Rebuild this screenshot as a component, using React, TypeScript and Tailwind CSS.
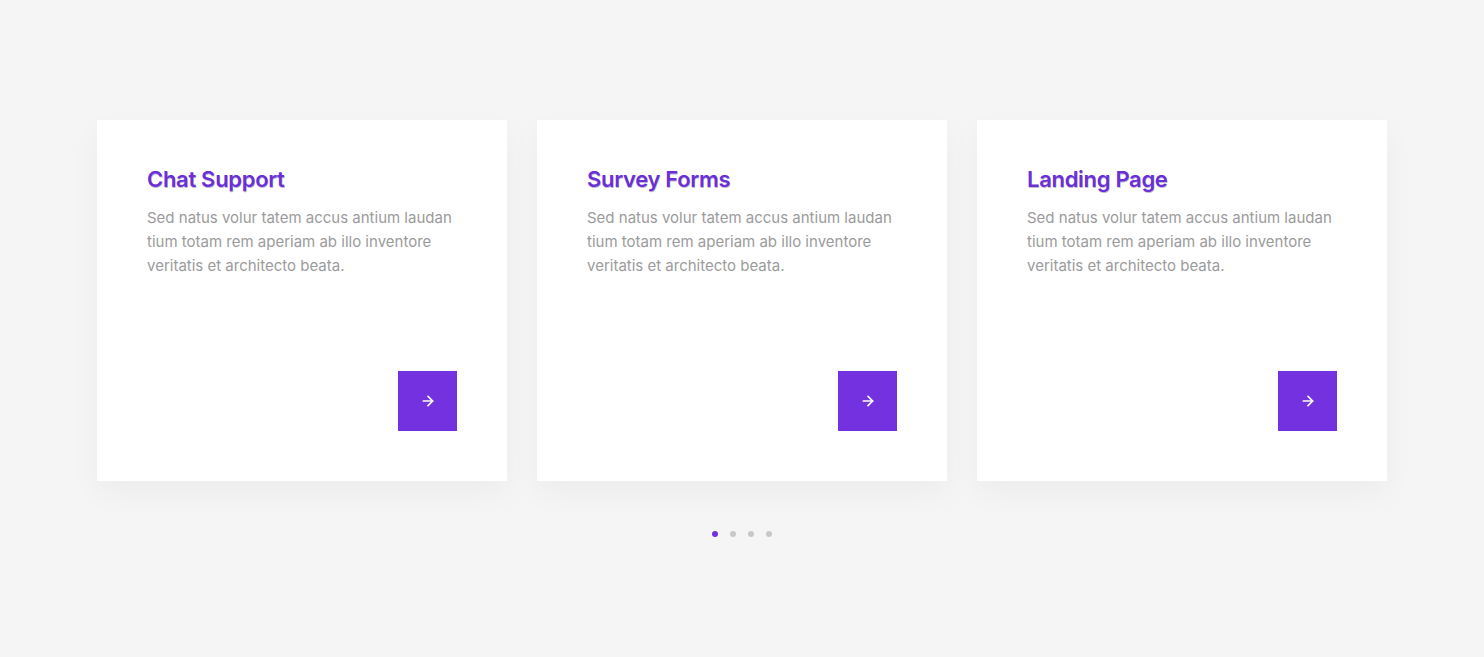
import { ArrowRight } from 'lucide-react'

const cards = [
  { title: 'Chat Support' },
  { title: 'Survey Forms' },
  { title: 'Landing Page' },
]

const body = 'Sed natus volur tatem accus antium laudan tium totam rem aperiam ab illo inventore veritatis et architecto beata.'

function ServiceCard({ title }: { title: string }) {
  return (
    <div className="flex h-[361px] w-[410px] flex-col bg-white px-[50px] pt-[44px] pb-[50px] shadow-[0_12px_30px_rgba(0,0,0,0.04)]">
      <h3 className="text-[22px] leading-[30px] font-semibold tracking-[-0.3px] text-[#6a2fd6] [text-shadow:0.5px_0.5px_0_rgba(40,20,90,0.3)]">
        {title}
      </h3>
      <p className="mt-[12px] w-[310px] text-[15px] leading-[24px] text-[#9b9b9b]">{body}</p>
      <div className="flex-1" />
      <div className="flex justify-end">
        <button className="flex h-[60px] w-[59px] items-center justify-center bg-[#7431e0] text-white">
          <ArrowRight size={16} strokeWidth={2.5} />
        </button>
      </div>
    </div>
  )
}

export default function App() {
  return (
    <div className="min-h-[657px] w-full bg-[#f5f5f5] pt-[120px] font-['Inter','Noto_Sans',sans-serif]">
      <div className="flex justify-center gap-[30px]">
        {cards.map((c) => (
          <ServiceCard key={c.title} title={c.title} />
        ))}
      </div>
      <div className="mt-[50px] flex justify-center gap-[12px]">
        <span className="h-[6px] w-[6px] rounded-full bg-[#7431e0]" />
        <span className="h-[6px] w-[6px] rounded-full bg-[#c8c8c8]" />
        <span className="h-[6px] w-[6px] rounded-full bg-[#c8c8c8]" />
        <span className="h-[6px] w-[6px] rounded-full bg-[#c8c8c8]" />
      </div>
    </div>
  )
}
